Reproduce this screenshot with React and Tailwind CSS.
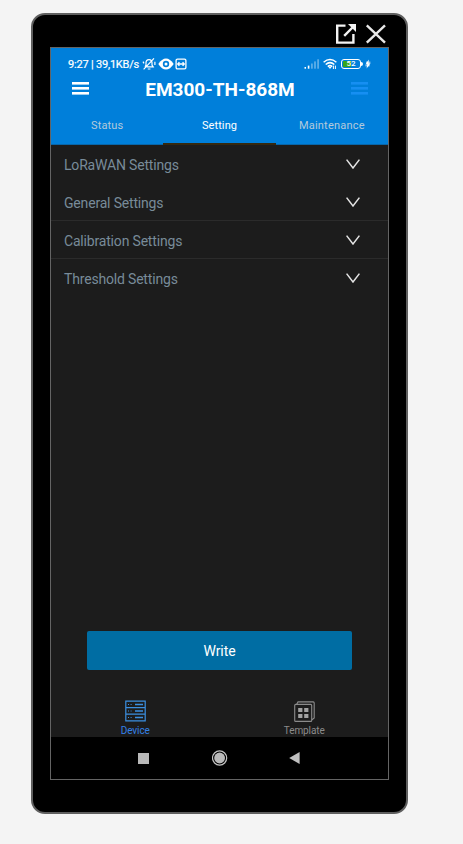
const settings = [
  { label: 'LoRaWAN Settings', divider: false },
  { label: 'General Settings', divider: true },
  { label: 'Calibration Settings', divider: true },
  { label: 'Threshold Settings', divider: false },
];

function WindowBar() {
  return (
    <div className="flex h-8 shrink-0 items-center justify-end gap-[8px] pr-[19px] pt-1.5">
      <svg className="h-[22px] w-[22px]" viewBox="0 0 22 22" fill="none" stroke="#f4f4f4" strokeWidth="2.4">
        <path d="M10.5 2.6H2.2V19.6H18.4V11" />
        <path d="M9.2 12.8L18 4" />
        <path d="M13 1H21V9Z" fill="#f4f4f4" stroke="none" />
      </svg>
      <svg className="h-[22px] w-[22px]" viewBox="0 0 22 22" fill="none" stroke="#e8e8e8" strokeWidth="2.4">
        <path d="M1.8 2.3L20 19.7M20 2.3L1.8 19.7" />
      </svg>
    </div>
  );
}

function StatusBar() {
  return (
    <div className="flex h-[32px] items-center pl-[17px] pr-[17px] text-white">
      <span className="w-[74px] whitespace-nowrap text-[11px] leading-none tracking-[-0.2px] [-webkit-text-stroke:0.2px_white]">9:27 | 39,1KB/s</span>
      <svg className="h-3 w-[14px]" viewBox="0 0 14 12" fill="none" stroke="white" strokeWidth="1.2">
        <path d="M3 8.8L4 7V4.8C4 2.9 5.4 1.6 7 1.6S10 2.9 10 4.8V7L11.2 8.8H4.6M5.8 11H8.4M12 .4L1.6 11.4M1 3.6L2 5.4M12.9 3.8V7" />
      </svg>
      <svg className="ml-0.5 h-3 w-4" viewBox="0 0 16 12">
        <path d="M.3 6Q4 .5 8 .5T15.7 6Q12 11.5 8 11.5T.3 6Z" fill="white" />
        <circle cx="8" cy="6" r="3.2" fill="#007fda" />
        <circle cx="8" cy="6" r="1.5" fill="white" />
      </svg>
      <svg className="ml-[1px] h-3 w-3" viewBox="0 0 12 12" fill="none" stroke="white" strokeWidth="1.3">
        <rect x="1.1" y="1.1" width="9.8" height="9.8" rx="1.4" />
        <path d="M2.7 6H9.3M4.4 4.1L2.7 6L4.4 7.9M7.6 4.1L9.3 6L7.6 7.9" />
      </svg>
      <svg className="ml-auto h-3 w-4" viewBox="0 0 16 12" fill="white">
        <rect x=".5" y="9" width="1.5" height="1.7" />
        <rect x="3.8" y="7.6" width="1.6" height="3.1" />
        <g opacity=".4">
          <rect x="7.1" y="5.5" width="1.6" height="5.2" />
          <rect x="10.2" y="3.4" width="1.6" height="7.3" />
          <rect x="13.3" y="1.3" width="1.6" height="9.4" />
        </g>
      </svg>
      <svg className="ml-[3px] h-3 w-[14px]" viewBox="0 0 14 12" fill="none" stroke="white" strokeWidth="1.5">
        <path d="M.6 4.2Q7-1.2 13.4 4.2M2.7 6.5Q7 2.8 11.3 6.5M4.8 8.6Q7 6.7 9.2 8.6" />
        <path d="M5.5 9L7 10.9L8.5 9Z" fill="white" stroke="none" />
        <path d="M10.4 7.6V11M12.4 7.6V11" strokeWidth="1" />
      </svg>
      <div className="ml-1 flex h-[10px] w-[20px] items-center rounded-[3px] border border-white p-px">
        <div className="relative flex h-full w-full items-center justify-center text-[8px] font-medium leading-none">
          <span className="absolute inset-y-0 left-0 w-2 bg-[#35a51c]" />
          <span className="relative">52</span>
        </div>
      </div>
      <span className="h-1 w-[2px] rounded-r-sm bg-white" />
      <svg className="ml-[2px] h-[10px] w-[6px]" viewBox="0 0 6 10" fill="white">
        <path d="M3.8.4L.4 5.5H2.3L1.6 9.6L5.6 4.3H3.5Z" />
        <path d="M1 3.2H5.4M.4 6.8H4.7" stroke="white" strokeWidth=".8" />
      </svg>
    </div>
  );
}

function MenuIcon({ color }) {
  return (
    <svg className="h-[13px] w-[17px]" viewBox="0 0 17 13" fill={color}>
      <rect width="17" height="2.6" y="0" />
      <rect width="17" height="2.6" y="5" />
      <rect width="17" height="2.6" y="10" />
    </svg>
  );
}

function Header() {
  return (
    <header className="h-[97px] shrink-0 bg-[#007fda]">
      <StatusBar />
      <div className="flex h-[17px] items-center justify-between pl-[21px] pr-5">
        <MenuIcon color="#ffffff" />
        <h1 className="whitespace-nowrap pt-px text-[19px] font-bold leading-none text-white">EM300-TH-868M</h1>
        <MenuIcon color="#168ff2" />
      </div>
      <nav className="grid h-12 grid-cols-3 text-center text-[11px] leading-[57px] text-[#b4cadb]">
        <span className="h-12 border-b border-[#0866a9] tracking-[0.15px]">Status</span>
        <span className="h-12 border-b-2 border-[#35280f] tracking-[0.1px] text-white">Setting</span>
        <span className="h-12 border-b border-[#0866a9] tracking-[0.2px]">Maintenance</span>
      </nav>
    </header>
  );
}

function SettingRow({ label, divider }) {
  return (
    <div className={`flex h-[38px] items-center justify-between border-b pl-[13px] pr-7 ${divider ? 'border-[#2b2b2b]' : 'border-transparent'}`}>
      <span className="pt-[2px] text-[14px] leading-none tracking-[-0.18px] text-[#788b99]">{label}</span>
      <svg className="h-[10px] w-[14px]" viewBox="0 0 14 10" fill="none" stroke="#e4e4e4" strokeWidth="1.5">
        <path d="M.6.6L7 9L13.4.6" />
      </svg>
    </div>
  );
}

function DeviceIcon() {
  return (
    <svg className="h-[22px] w-[21px]" viewBox="0 0 21 22" fill="none" stroke="#3b8fe0" strokeWidth="1.2">
      <path d="M.8 1.2H20.2V20.8H.8ZM.8 7.6H20.2M.8 14.1H20.2" />
      <path d="M10 4.5H18M10 11H18M10 17.5H18" strokeWidth="1.4" />
      <path d="M3 4.5H4M5.6 4.5H6.6M3 11H4M5.6 11H6.6M3 17.5H4M5.6 17.5H6.6" />
    </svg>
  );
}

function TemplateIcon() {
  return (
    <svg className="h-[22px] w-[21px]" viewBox="0 0 21 22" fill="none" stroke="#8b8b8b" strokeWidth="1.1">
      <rect x=".7" y="4.4" width="17" height="17" rx="1" />
      <path d="M2.7 4.2L4 1.9H19.2Q20.2 1.9 20.2 2.9V18L18 19.8" />
      <path d="M4.2 8H8.4V12H4.2ZM10.2 8H14.4V12H10.2ZM4.2 14H8.4V18H4.2ZM10.2 14H14.4V18H10.2Z" fill="#a2a2a2" stroke="none" />
    </svg>
  );
}

function SystemNav() {
  return (
    <div className="flex h-[42px] shrink-0 items-center bg-black pl-[87px]">
      <span className="h-[11px] w-[11px] bg-[#b9b9b9]" />
      <svg className="ml-[63px] h-4 w-4" viewBox="0 0 16 16" fill="none" stroke="#c4c4c4">
        <circle cx="7.6" cy="8" r="7.1" strokeWidth="1.2" />
        <circle cx="7.6" cy="8" r="5.4" fill="#b9b9b9" stroke="none" />
      </svg>
      <svg className="ml-[61px] h-3 w-[11px]" viewBox="0 0 11 12" fill="#bfbfbf">
        <path d="M.2 6L10.6 0V12Z" />
      </svg>
    </div>
  );
}

export default function App() {
  return (
    <div className="h-[844px] w-[463px] overflow-hidden bg-[#f4f4f4] pl-[31px] pt-[13px] font-['Roboto',sans-serif]">
      <div className="flex h-[801px] w-[377px] flex-col rounded-[14px] border-2 border-[#5f5f5f] bg-black">
        <WindowBar />
        <div className="ml-[17px] flex h-[733px] w-[339px] shrink-0 flex-col border border-[#646464] bg-[#1c1c1c]">
          <Header />
          <main className="flex min-h-0 flex-1 flex-col">
            {settings.map((item) => (
              <SettingRow key={item.label} {...item} />
            ))}
            <button className="mb-[30px] ml-9 mt-auto h-[39px] w-[265px] rounded-[2px] bg-[#006da3] pt-px text-[14px] leading-none tracking-[-0.1px] text-white">
              Write
            </button>
            <div className="grid h-[37px] shrink-0 grid-cols-2 text-[10px] leading-none">
              <div className="flex flex-col items-center gap-[4px] text-[#3380e6]">
                <DeviceIcon />
                <span className="tracking-[-0.1px]">Device</span>
              </div>
              <div className="flex flex-col items-center gap-[4px] pl-px text-[#8b8b8b]">
                <TemplateIcon />
                <span className="tracking-[-0.1px]">Template</span>
              </div>
            </div>
          </main>
          <SystemNav />
        </div>
      </div>
    </div>
  );
}
